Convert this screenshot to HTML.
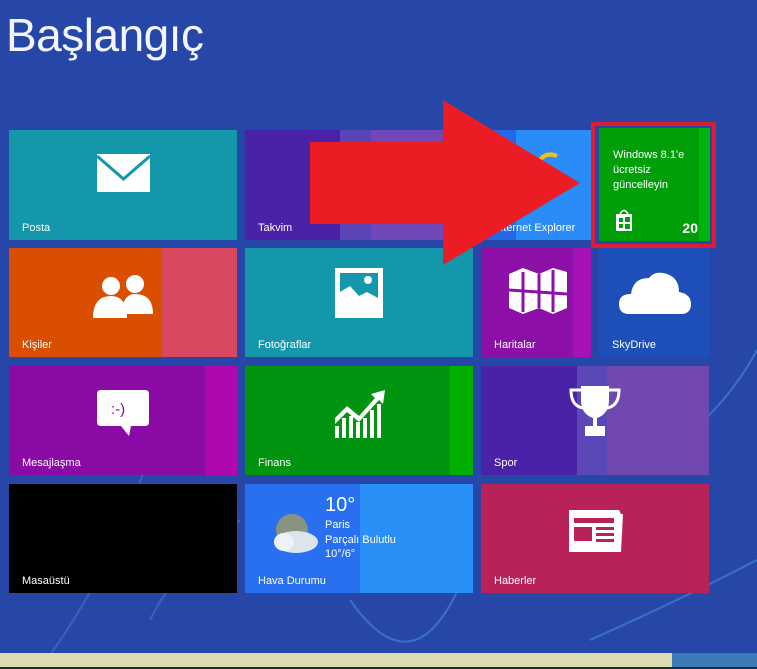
<!DOCTYPE html>
<html><head><meta charset="utf-8"><style>
*{margin:0;padding:0;box-sizing:border-box}
body{width:757px;height:669px;overflow:hidden;background:#2747a8;font-family:"Liberation Sans",sans-serif;position:relative;color:#fff}
.t{position:absolute;overflow:hidden}
.l{position:absolute;left:13px;bottom:6px;font-size:11px;color:#fff}
.ab{position:absolute}
h1{position:absolute;left:6px;top:8px;font-size:46px;font-weight:normal;letter-spacing:-0.5px;color:#f4f6ff}
</style></head><body>
<svg class="ab" style="left:0;top:0" width="757" height="669">
<path d="M40 669 Q120 560 150 450" stroke="#3a60c0" stroke-width="2" fill="none"/>
<path d="M150 620 Q180 560 240 520" stroke="#3a60c0" stroke-width="2" fill="none"/>
<path d="M350 600 Q420 700 470 560" stroke="#3a70c8" stroke-width="2" fill="none"/>
<path d="M590 640 Q680 600 757 560" stroke="#3a70c8" stroke-width="2" fill="none"/>
<path d="M640 470 Q720 420 757 350" stroke="#3a70c8" stroke-width="2" fill="none"/>
</svg>
<h1>Başlangıç</h1>

<!-- row1 -->
<div class="t" style="left:9px;top:130px;width:228px;height:110px;background:#1497ab">
<svg class="ab" style="left:88px;top:24px" width="53" height="38"><rect width="53" height="38" fill="#fff"/><path d="M0 2 L26.5 25 L53 2" stroke="#1497ab" stroke-width="3" fill="none"/></svg>
<div class="l">Posta</div></div>
<div class="t" style="left:245px;top:130px;width:228px;height:110px;background:linear-gradient(90deg,#4a22a8 0 95px,#5a44b8 95px 126px,#7048b8 126px)"><div class="l">Takvim</div></div>
<div class="t" style="left:481px;top:130px;width:110px;height:110px;background:linear-gradient(90deg,#2468ea 0 35px,#2a8cf8 35px)">
<svg class="ab" style="left:50px;top:18px" width="30" height="30"><path d="M4 20 Q12 2 26 8" stroke="#f0c020" stroke-width="4" fill="none"/></svg>
<div class="l">Internet Explorer</div></div>
<div class="ab" style="left:591px;top:122px;width:125px;height:126px;border:4px solid #e01c30;background:#2747a8"></div>
<div class="t" style="left:599px;top:128px;width:111px;height:113px;background:linear-gradient(90deg,#009e08 0 100px,#00b410 100px)">
<div style="position:absolute;left:14px;top:20px;font-size:11px;line-height:15px">Windows 8.1'e<br>ücretsiz<br>güncelleyin</div>
<svg class="ab" style="left:16px;top:80px" width="18" height="24"><path d="M5 6 Q9 -1 13 6" stroke="#fff" stroke-width="1.5" fill="none"/><rect x="1" y="6" width="16" height="17" fill="#fff"/><rect x="4" y="10" width="4" height="4" fill="#009e08"/><rect x="10" y="9" width="5" height="5" fill="#009e08"/><rect x="4" y="16" width="4" height="4" fill="#009e08"/><rect x="10" y="16" width="5" height="5" fill="#009e08"/></svg>
<div style="position:absolute;right:12px;bottom:5px;font-size:14px;font-weight:bold">20</div></div>

<!-- row2 -->
<div class="t" style="left:9px;top:248px;width:228px;height:109px;background:linear-gradient(90deg,#d94e00 0 153px,#d84860 153px)">
<svg class="ab" style="left:84px;top:26px" width="60" height="44" fill="#fff"><circle cx="18" cy="12" r="9"/><path d="M0 44 Q0 22 18 22 Q34 22 34 44Z"/><circle cx="42" cy="10" r="9"/><path d="M28 40 Q30 20 42 20 Q60 20 60 40Z"/></svg>
<div class="l">Kişiler</div></div>
<div class="t" style="left:245px;top:248px;width:228px;height:109px;background:#1497ab">
<svg class="ab" style="left:90px;top:20px" width="48" height="50"><rect width="48" height="50" fill="#fff"/><rect x="5" y="5" width="38" height="33" fill="#1497ab"/><path d="M5 38 L5 24 L15 18 L24 28 L32 24 L43 30 L43 38Z" fill="#fff"/><circle cx="33" cy="12" r="4" fill="#fff"/></svg>
<div class="l">Fotoğraflar</div></div>
<div class="t" style="left:481px;top:248px;width:110px;height:109px;background:linear-gradient(90deg,#8c10a8 0 92px,#a810b8 92px)">
<svg class="ab" style="left:28px;top:20px" width="58" height="46" fill="#fff"><path d="M0 6 L14 0 L30 6 L44 0 L58 4 L58 40 L44 46 L30 40 L14 46 L0 40Z"/><path d="M14 4 L14 44 M30 6 L30 40 M44 2 L44 44 M0 22 L58 26" stroke="#8c10a8" stroke-width="3"/></svg>
<div class="l">Haritalar</div></div>
<div class="t" style="left:599px;top:248px;width:110px;height:109px;background:#1e4fb8">
<svg class="ab" style="left:20px;top:22px" width="72" height="46"><path d="M10 44 Q0 44 0 34 Q0 24 12 24 Q14 8 30 8 Q36 0 48 4 Q60 8 60 22 Q72 24 72 34 Q72 44 62 44Z" fill="#fff"/></svg>
<div class="l">SkyDrive</div></div>

<!-- row3 -->
<div class="t" style="left:9px;top:366px;width:228px;height:109px;background:linear-gradient(90deg,#8a0aa6 0 196px,#b008b0 196px)">
<svg class="ab" style="left:88px;top:24px" width="52" height="46"><path d="M4 0 H48 Q52 0 52 4 V32 Q52 36 48 36 H34 L32 46 L24 36 H4 Q0 36 0 32 V4 Q0 0 4 0Z" fill="#fff"/><text x="14" y="24" font-size="15" fill="#8a0aa6" font-family="Liberation Sans">:-)</text></svg>
<div class="l">Mesajlaşma</div></div>
<div class="t" style="left:245px;top:366px;width:228px;height:109px;background:linear-gradient(90deg,#009410 0 205px,#00b000 205px)">
<svg class="ab" style="left:88px;top:22px" width="54" height="50" fill="#fff"><path d="M2 30 L14 18 L26 28 L42 10 L38 6 L52 2 L50 16 L46 12 L26 34 L14 24 L2 36Z"/><rect x="2" y="38" width="4" height="12"/><rect x="9" y="30" width="4" height="20"/><rect x="16" y="28" width="4" height="22"/><rect x="23" y="34" width="4" height="16"/><rect x="30" y="30" width="4" height="20"/><rect x="37" y="22" width="4" height="28"/><rect x="44" y="16" width="4" height="34"/></svg>
<div class="l">Finans</div></div>
<div class="t" style="left:481px;top:366px;width:228px;height:109px;background:linear-gradient(90deg,#4a22a8 0 96px,#5a48b8 96px 126px,#7048b0 126px)">
<svg class="ab" style="left:88px;top:20px" width="52" height="52" fill="#fff"><path d="M12 0 H40 V14 Q40 28 28 32 V40 H36 V50 H16 V40 H24 V32 Q12 28 12 14Z"/><path d="M12 4 H2 Q2 20 14 22" stroke="#fff" stroke-width="3" fill="none"/><path d="M40 4 H50 Q50 20 38 22" stroke="#fff" stroke-width="3" fill="none"/></svg>
<div class="l">Spor</div></div>

<!-- row4 -->
<div class="t" style="left:9px;top:484px;width:228px;height:109px;background:#000"><div class="l">Masaüstü</div></div>
<div class="t" style="left:245px;top:484px;width:228px;height:109px;background:linear-gradient(90deg,#2870f0 0 115px,#2a90f8 115px)">
<svg class="ab" style="left:27px;top:28px" width="48" height="44"><circle cx="20" cy="18" r="16" fill="#8a9280"/><ellipse cx="24" cy="30" rx="22" ry="11" fill="#dce4ee"/><ellipse cx="12" cy="30" rx="10" ry="9" fill="#eef2f6"/></svg>
<div style="position:absolute;left:80px;top:10px;font-size:20px">10°</div>
<div style="position:absolute;left:80px;top:34px;font-size:11px;line-height:14.5px">Paris<br>Parçalı Bulutlu<br>10°/6°</div>
<div class="l">Hava Durumu</div></div>
<div class="t" style="left:481px;top:484px;width:228px;height:109px;background:#b82258">
<svg class="ab" style="left:88px;top:26px" width="56" height="42"><path d="M0 0 H50 L52 4 H54 L52 42 H0Z" fill="#fff"/><rect x="5" y="8" width="40" height="5" fill="#b82258"/><rect x="5" y="17" width="18" height="14" fill="#b82258"/><rect x="27" y="17" width="18" height="3" fill="#b82258"/><rect x="27" y="23" width="18" height="3" fill="#b82258"/><rect x="27" y="29" width="18" height="3" fill="#b82258"/></svg>
<div class="l">Haberler</div></div>

<!-- arrow -->
<svg class="ab" style="left:0;top:0" width="757" height="669"><path d="M310 142 H443 V100 L580 183 L443 265 V224 H310Z" fill="#ec1c24"/></svg>

<div class="ab" style="left:0;top:653px;width:672px;height:14px;background:#dcdcb0"></div>
<div class="ab" style="left:672px;top:653px;width:85px;height:14px;background:#3a7ab8"></div>
<div class="ab" style="left:0;top:667px;width:757px;height:2px;background:#1a2a40"></div>
</body></html>
